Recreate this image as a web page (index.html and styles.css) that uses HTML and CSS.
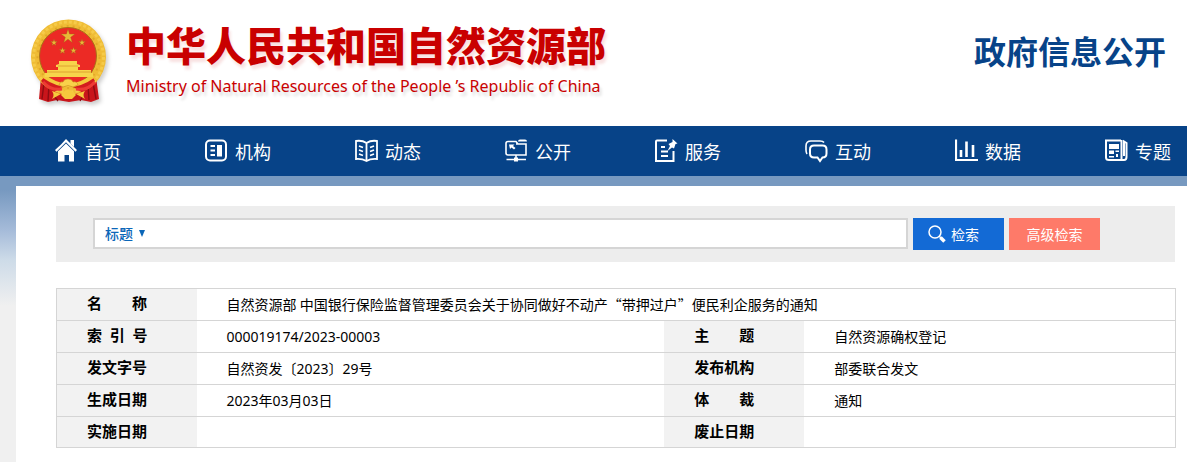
FILE: index.html
```
<!DOCTYPE html>
<html lang="zh-CN">
<head>
<meta charset="utf-8">
<title>政府信息公开</title>
<link rel="stylesheet" href="styles.css">
</head>
<body>
<header class="header">
  <a class="brand" href="#">
    <svg class="emblem" viewBox="0 -1 78 84" aria-hidden="true">
      <path d="M11 58 9 80l9 3 9-2 12 2 12-2 10 2 8-3-3-22z" fill="#c9151b"/>
      <path d="m14 64-2 16m7-14-1 16m45-18 3 16m-8-14 1 15M24 77l4 5m25-5-3 5" stroke="#8e0c12" stroke-width="1.4" fill="none"/>
      <circle cx="38.500" cy="38" r="37.500" fill="#efbc35"/>
      <circle cx="38.500" cy="38" r="35" fill="none" stroke="#f6cb4a" stroke-width="3" stroke-dasharray="3 2"/>
      <circle cx="38.500" cy="38" r="31" fill="none" stroke="#e2a829" stroke-width="2" stroke-dasharray="2 4"/>
      <circle cx="38" cy="37" r="28.500" fill="#ec2a25" stroke="#a97018"/>
      <path d="M15 57q23 19 47 0l3 5-12 12-8-5-7-3-8 3-7 5-12-12z" fill="#d31c1e"/>
      <path d="M14 55q24 19 49 0l1 4q-25 18-51 0z" fill="#f5c83c"/>
      <g fill="#e8b937" stroke="#a8541a" stroke-width=".4">
        <path d="m38 10 1.600 5 5.400.1-4.300 3.200 1.600 5.200-4.300-3.200-4.300 3.200 1.600-5.200L31 15.100l5.400-.1z"/>
        <path d="m24 20 .8 2.400 2.700.1-2.200 1.600.8 2.500-2.100-1.500-2.100 1.500.8-2.500-2.200-1.600 2.700-.1zM52 20l.8 2.400 2.700.1-2.200 1.600.8 2.500-2.100-1.500-2.100 1.500.8-2.500-2.200-1.600 2.700-.1zM32.500 28l.8 2.400 2.700.1-2.200 1.600.8 2.500-2.100-1.500-2.100 1.500.8-2.500-2.200-1.600 2.700-.1zM43.500 28l.8 2.400 2.700.1-2.200 1.600.8 2.500-2.100-1.500-2.100 1.500.8-2.500-2.200-1.600 2.700-.1z"/>
      </g>
      <path d="M29 42h18v3l3 1v2h-2v3h13v3h2v4H15v-4h2v-3h11v-3h-2v-2l3-1z" fill="#f7d44b"/>
      <path d="M28 47h20M17 53h44" stroke="#d99828" stroke-width=".8"/>
      <path d="M29 66q1-4 4-3 1-3 5-3t5 3q4-1 5 3l-5 2q-5-3-10 0z" fill="#f9d14a" stroke="#c78a1c" stroke-width=".6"/>
      <path d="M31 76q3-5 7-5t8 5l-4 4h-7zM22 72l9 3-9 5q3-4 0-8zM55 72l-9 3 9 5q-3-4 0-8z" fill="#f6c93d"/>
      <path d="M13 63q8 9 19 7M65 63q-8 9-19 7" fill="none" stroke="#ee3a34" stroke-width="3"/>
    </svg>
    <span class="brand-text">
      <span class="brand-cn">中华人民共和国自然资源部</span>
      <span class="brand-en">Ministry of Natural Resources of the People ’s Republic of China</span>
    </span>
  </a>
  <h1 class="section-title">政府信息公开</h1>
</header>
<nav class="nav">
  <a href="#"><svg viewBox="0 0 24 24"><path class="solid" d="m11 0 11 11-1.500 1.700L11 3.200 1.500 12.700 0 11 6 5.500z"/><path class="solid" d="M15.500 1H19v7l-3.500-3.500zM11 4.600l8 7.700V22.500h-5V16H9.500v6.500H3V12.300z"/></svg>首页</a>
  <a href="#"><svg viewBox="0 0 24 24"><rect x="1" y="1.500" width="20" height="20" rx="4"/><path d="M5.500 7H10M5.500 11.500H10M5.500 16H10"/><path class="solid" d="M12 6h5v11.500h-5z"/></svg>机构</a>
  <a href="#"><svg viewBox="0 0 24 24"><path d="M11.500 4Q7 1 1 2v18q6-.500 10.500 2 4-2.500 10.500-2V2q-6-1-10.500 2v18M4 7l4 1.500M4 11l4 1.500M4 15l4 1.500M19 7l-4 1.500m4 2.500-4 1.500m4 2.500-4 1.500" stroke-width="1.800"/></svg>动态</a>
  <a href="#"><svg viewBox="0 0 24 24"><path d="M13 5 11 2.500H3Q1 2.500 1 4.500V14q0 2 2 2h18V5H11M11 16v5M1.500 20.500H21" stroke-width="1.600"/><path class="solid" d="M13 2.500q0-2 2-2h5q2 0 2 2zM4 5.500h5.500L8 7l2.500 2L9 10.500l-2.500-2L5 10zM9 18.500h4v4H9z"/></svg>公开</a>
  <a href="#"><svg viewBox="0 0 24 24"><path d="M12 1.500H2q-1 0-1 1V22h17.500V12M6 8h4M6 12.500h7M6 17h7" stroke-width="2"/><path class="solid" d="m17.500 0 5 4.500-2 .5-1.500 4.500-2-1-4.500 3.500 2.500-5-1.500-2 4-2z"/></svg>服务</a>
  <a href="#"><svg viewBox="0 0 24 24"><path d="M2 15q-1-1.500-1-4V7q0-5 5-5h9q3 0 4 1.500" stroke-width="1.600"/><path d="M9 6.500h8.500q4 0 4 4v4q0 4-4 4l-2.500 3.500-2.500-3.500H9q-4 0-4-4v-4q0-4 4-4z"/></svg>互动</a>
  <a href="#"><svg viewBox="0 0 24 24"><path d="M1 .500v20.500h22" stroke-width="2.200"/><path d="M6 11v7M11.500 2.500V18M18 6v12" stroke-width="2.600"/></svg>数据</a>
  <a href="#"><svg viewBox="0 0 24 24"><path d="M16 1.500H1V18.500q0 2.500 3 2.500H19q2.500 0 2.500-3V4L19 2.500V17M16.500 1v19"/><path class="solid" d="M4 5h10v5H4zM4 11.500h5V15H4zM10.500 11.500H14V13h-3.500zM11 15h2v3h-2zM4 17h5v1.500H4z"/></svg>专题</a>
</nav>
<div class="backdrop">
<main class="content">
  <form class="search">
    <div class="search-box">
      <select class="field" aria-label="检索范围"><option>标题</option></select>
      <svg class="caret" viewBox="0 0 6 7" aria-hidden="true"><path d="M0 0h6L3 7z"/></svg>
      <input class="query" type="text" aria-label="检索词">
    </div>
    <button class="btn btn-search" type="submit"><svg viewBox="0 0 18 18" aria-hidden="true"><circle cx="7" cy="7" r="6" stroke-width="1.500"/><path d="m11 11 2 2" stroke-width="1.500"/><path d="m12.500 12.500 4 4" stroke-width="3.500"/></svg>检索</button>
    <button class="btn btn-advanced" type="button">高级检索</button>
  </form>
  <table class="meta">
    <colgroup><col class="col-label"><col class="col-value"><col class="col-label"><col></colgroup>
    <tr><th scope="row">名&emsp;&emsp;称</th><td colspan="3" class="doc-title">自然资源部 中国银行保险监督管理委员会关于协同做好不动产“带押过户”便民利企服务的通知</td></tr>
    <tr><th scope="row">索&nbsp;&nbsp;引&nbsp;&nbsp;号</th><td>000019174/2023-00003</td><th scope="row">主&emsp;&emsp;题</th><td>自然资源确权登记</td></tr>
    <tr><th scope="row">发文字号</th><td>自然资发〔2023〕29号</td><th scope="row">发布机构</th><td>部委联合发文</td></tr>
    <tr><th scope="row">生成日期</th><td>2023年03月03日</td><th scope="row">体&emsp;&emsp;裁</th><td>通知</td></tr>
    <tr class="last"><th scope="row">实施日期</th><td></td><th scope="row">废止日期</th><td></td></tr>
  </table>
</main>
</div>
</body>
</html>
```
FILE: styles.css
```
* { box-sizing: border-box; }

body {
  margin: 0;
  background: #f0f0f0;
  color: #000;
  font-family: "Noto Sans", "Noto Sans CJK SC", sans-serif;
  font-size: 14px;
}

a { color: inherit; text-decoration: none; }

.header {
  display: flex;
  justify-content: space-between;
  align-items: flex-start;
  min-height: 126px;
  padding: 18px 21px 0 30px;
  background: #fff;
}

.brand { display: flex; gap: 18px; color: #c90000; }

.emblem {
  width: 78px;
  height: 84px;
  filter: drop-shadow(2px 3px 2px rgba(0, 0, 0, .2));
}

.brand-text { display: flex; flex-direction: column; white-space: nowrap; }

.brand-cn {
  font-size: 40px;
  font-weight: 900;
  line-height: 56px;
  text-shadow: 2px 4px 3px rgba(200, 0, 0, .12);
}

.brand-en {
  font-size: 16px;
  line-height: 24px;
  text-shadow: 2px 4px 3px rgba(0, 0, 0, .15);
}

.section-title {
  margin: 10px 0 0;
  color: #074388;
  font-size: 32px;
  font-weight: 700;
  line-height: 48px;
  white-space: nowrap;
}

.nav {
  display: flex;
  justify-content: space-between;
  align-items: center;
  height: 50px;
  padding: 0 16px 0 55px;
  background: #074388;
  color: #fff;
  font-size: 18px;
}

.nav a { display: flex; align-items: center; gap: 6px; white-space: nowrap; }

.nav svg {
  width: 24px;
  height: 24px;
  fill: none;
  stroke: #fff;
  stroke-width: 2;
}

.nav .solid { fill: #fff; stroke: none; }

.backdrop {
  min-height: calc(100vh - 176px);
  padding: 10px 0 0 16px;
  background: linear-gradient(#7799c0 0, #7799c0 14px, #a5bbd9 54px, #cddbe8 84px, #f0f0f0 130px);
}

.content {
  min-height: calc(100vh - 186px);
  padding: 20px 11px 14px 40px;
  background: #fff;
}

.search {
  display: flex;
  gap: 5px;
  margin-right: 1px;
  padding: 12px 75px 12px 37px;
  background: #ededed;
}

.search-box {
  display: flex;
  flex: 1;
  align-items: center;
  height: 31px;
  padding-left: 10px;
  border: 2px solid #d5d5d5;
  background: #fff;
}

.field {
  appearance: none;
  width: 34px;
  padding: 0 0 2px;
  border: 0;
  background: none;
  color: #0b66b8;
  font: 500 14px "Noto Sans CJK SC", sans-serif;
}

.caret { width: 6px; height: 7px; fill: #0b66b8; }

.query {
  flex: 1;
  min-width: 0;
  height: 27px;
  padding: 0 8px;
  border: 0;
  outline: 0;
  background: none;
  font: inherit;
}

.btn {
  display: flex;
  justify-content: center;
  align-items: center;
  gap: 5px;
  width: 91px;
  height: 32px;
  padding: 0;
  border: 0;
  color: #fff;
  font: 14px "Noto Sans CJK SC", sans-serif;
}

.btn svg { width: 18px; height: 18px; fill: none; stroke: #fff; }

.btn-search { padding-right: 10px; background: #136ad5; }

.btn-advanced { background: #fe7a69; }

.meta {
  width: 100%;
  margin-top: 26px;
  border: 1px solid #d5d5d5;
  border-collapse: collapse;
  table-layout: fixed;
}

.col-label { width: 140px; }
.col-value { width: 41.8%; }

.meta tr { border-bottom: 1px solid #d5d5d5; }

.meta th,
.meta td {
  height: 32px;
  padding: 0 0 0 30px;
  line-height: 22px;
  text-align: left;
}

.meta th {
  padding-bottom: 3px;
  background: #f2f2f2;
  font-size: 15px;
  font-weight: 700;
}

.meta .last th,
.meta .last td { height: 31px; }

.meta .doc-title { padding-bottom: 2px; font-family: "Noto Sans CJK SC", sans-serif; }
```
